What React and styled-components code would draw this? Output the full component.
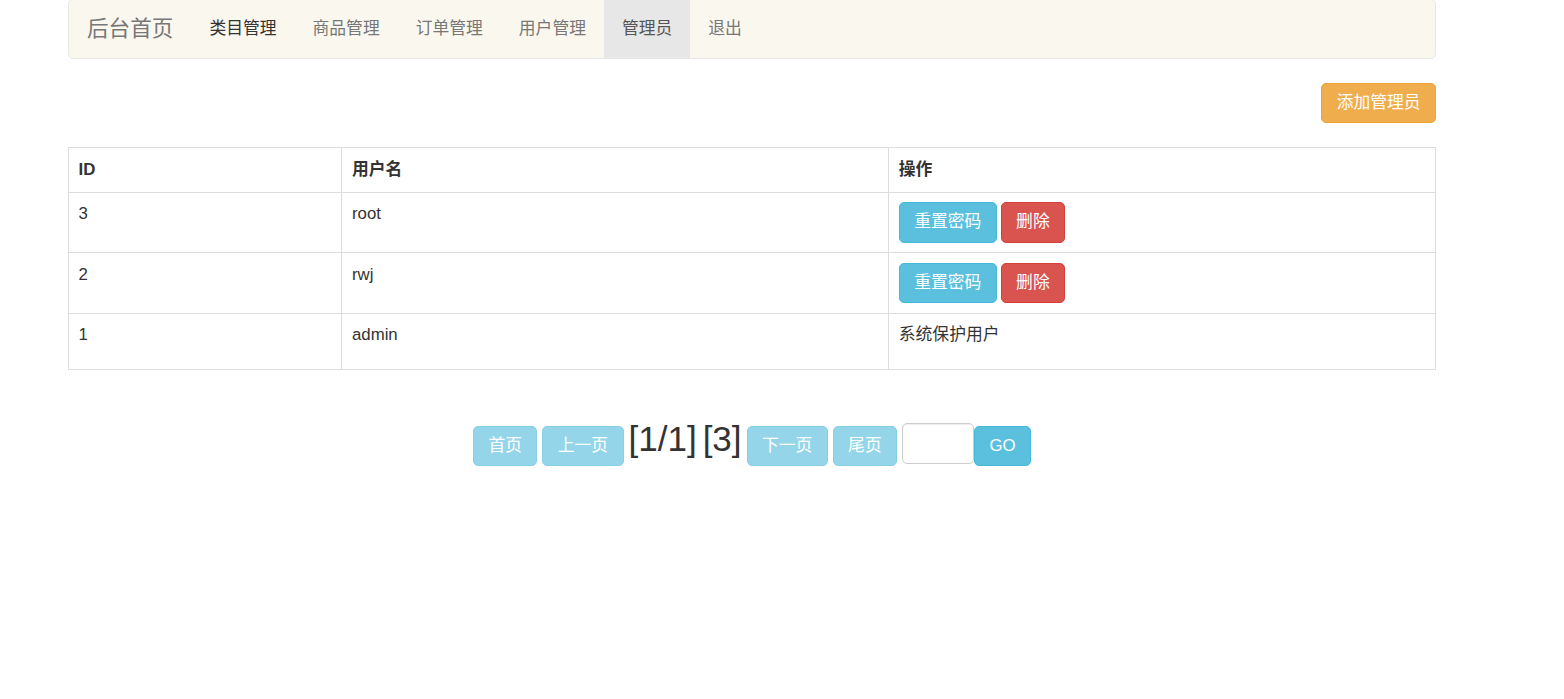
import React from "react";
import styled, { createGlobalStyle } from "styled-components";

const Global = createGlobalStyle`
  html, body { margin: 0; padding: 0; background: #fff; }
  body {
    font-family: "Liberation Sans", Arial, "Noto Sans CJK SC", sans-serif;
    font-size: 16.8px;
    line-height: 24px;
    color: #333;
  }
  * { box-sizing: border-box; }
`;

const Container = styled.div`
  width: 1368px;
  margin-left: 68px;
`;

const Navbar = styled.nav`
  margin-top: -1px;
  height: 60px;
  display: flex;
  align-items: stretch;
  background: #faf7ef;
  border: 1px solid #e7e7e7;
  border-radius: 5px;
`;

const Brand = styled.a`
  display: flex;
  align-items: center;
  padding: 0 18px;
  font-size: 21.6px;
  color: #777;
  text-decoration: none;
`;

const NavList = styled.ul`
  display: flex;
  list-style: none;
  margin: 0;
  padding: 0;
`;

const NavItem = styled.li`
  display: flex;
  align-items: center;
  padding: 0 18px;
  color: ${(p) => (p.$active ? "#555" : p.$focus ? "#333" : "#777")};
  background: ${(p) => (p.$active ? "#e7e7e7" : "transparent")};
  cursor: pointer;
`;

const Toolbar = styled.div`
  display: flex;
  justify-content: flex-end;
  margin-top: 24px;
  margin-bottom: 24px;
`;

const Button = styled.button`
  display: inline-block;
  height: 40.4px;
  padding: 0 14.4px;
  font-family: inherit;
  font-size: 16.8px;
  line-height: 24px;
  color: #fff;
  border: 1px solid ${(p) => p.$border};
  background: ${(p) => p.$bg};
  border-radius: 5px;
  opacity: ${(p) => (p.$disabled ? 0.65 : 1)};
  cursor: pointer;
  white-space: nowrap;
`;

const Table = styled.table`
  width: 100%;
  border-collapse: collapse;
  table-layout: fixed;
  margin-bottom: 24px;
`;

const Th = styled.th`
  border: 1px solid #ddd;
  padding: 9.6px;
  text-align: left;
  font-weight: bold;
  vertical-align: bottom;
  width: ${(p) => p.$w};
`;

const Td = styled.td`
  border: 1px solid #ddd;
  padding: 9.6px;
  vertical-align: top;
`;

const Actions = styled.div`
  display: flex;
  gap: 4px;
`;

const Note = styled.p`
  margin: 0 0 12px;
`;

const Pager = styled.div`
  display: flex;
  justify-content: center;
  align-items: baseline;
  gap: 5px;
  margin-top: 49px;
`;

const PageInfo = styled.span`
  font-size: 35px;
  line-height: 40px;
  color: #333;
  margin-right: ${(p) => p.$mr || "0"};
`;

const PageInput = styled.input`
  width: 72px;
  height: 41px;
  margin-bottom: 2px;
  border: 1px solid #ccc;
  border-radius: 5px;
  padding: 0 10px;
  font-size: 16.8px;
  font-family: inherit;
  outline: none;
  box-shadow: inset 0 1px 1px rgba(0, 0, 0, 0.075);
`;

const InputGroup = styled.div`
  display: flex;
  align-items: flex-end;
  align-self: flex-end;
`;

const INFO = { $bg: "#5bc0de", $border: "#46b8da" };
const DANGER = { $bg: "#d9534f", $border: "#d43f3a" };
const WARN = { $bg: "#f0ad4e", $border: "#eea236" };

const rows = [
  { id: 3, name: "root" },
  { id: 2, name: "rwj" },
];

export default function App() {
  return (
    <>
      <Global />
      <Container>
        <Navbar>
          <Brand>后台首页</Brand>
          <NavList>
            <NavItem $focus>类目管理</NavItem>
            <NavItem>商品管理</NavItem>
            <NavItem>订单管理</NavItem>
            <NavItem>用户管理</NavItem>
            <NavItem $active>管理员</NavItem>
            <NavItem>退出</NavItem>
          </NavList>
        </Navbar>
        <Toolbar>
          <Button {...WARN}>添加管理员</Button>
        </Toolbar>
        <Table>
          <thead>
            <tr>
              <Th $w="20%">ID</Th>
              <Th $w="40%">用户名</Th>
              <Th $w="40%">操作</Th>
            </tr>
          </thead>
          <tbody>
            {rows.map((r) => (
              <tr key={r.id}>
                <Td>{r.id}</Td>
                <Td>{r.name}</Td>
                <Td>
                  <Actions>
                    <Button {...INFO}>重置密码</Button>
                    <Button {...DANGER}>删除</Button>
                  </Actions>
                </Td>
              </tr>
            ))}
            <tr>
              <Td>1</Td>
              <Td>admin</Td>
              <Td>
                <Note>系统保护用户</Note>
              </Td>
            </tr>
          </tbody>
        </Table>
        <Pager>
          <Button {...INFO} $disabled>首页</Button>
          <Button {...INFO} $disabled>上一页</Button>
          <PageInfo $mr="1px">[1/1]</PageInfo>
          <PageInfo>[3]</PageInfo>
          <Button {...INFO} $disabled>下一页</Button>
          <Button {...INFO} $disabled>尾页</Button>
          <InputGroup>
            <PageInput type="text" />
            <Button {...INFO}>GO</Button>
          </InputGroup>
        </Pager>
      </Container>
    </>
  );
}
